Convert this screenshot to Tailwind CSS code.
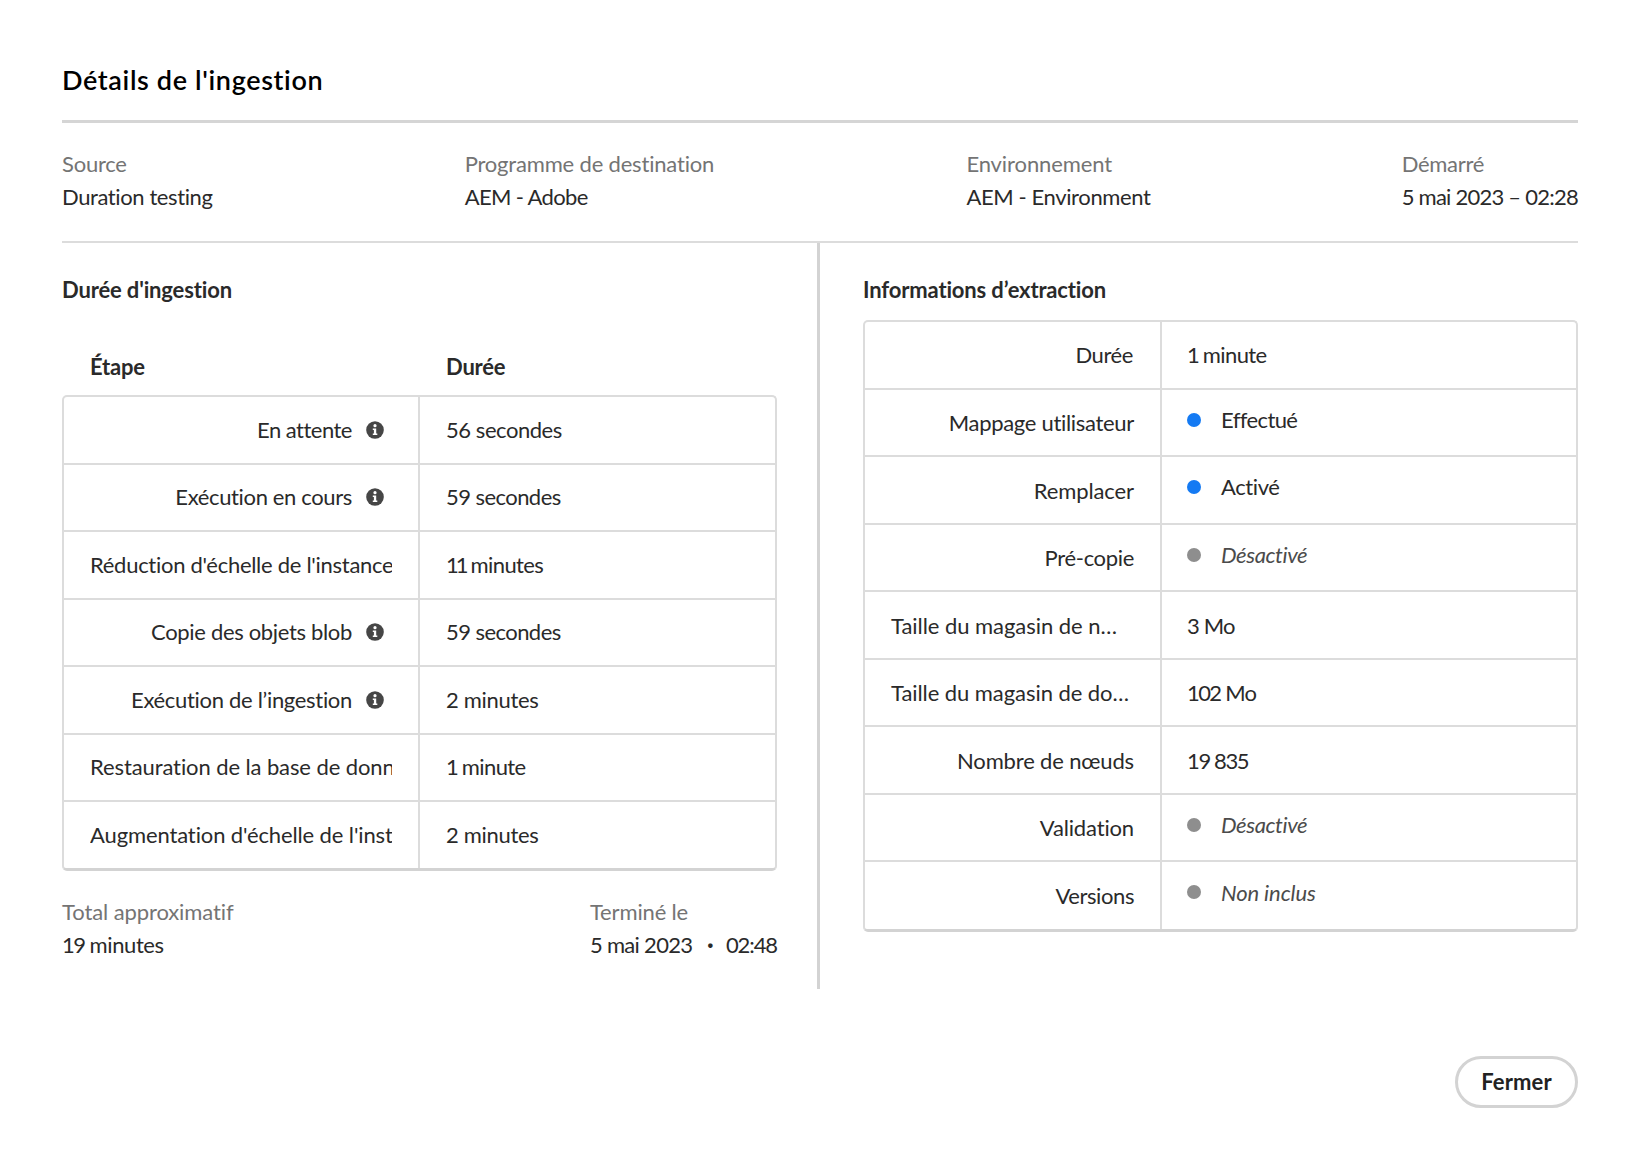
<!DOCTYPE html>
<html lang="fr">
<head>
<meta charset="utf-8">
<title>Détails de l'ingestion</title>
<script src="https://cdn.jsdelivr.net/npm/@tailwindcss/browser@4"></script>
</head>
<body class="bg-white">
<svg class="hidden">
  <symbol id="info" viewBox="0 0 18 18">
    <circle cx="9" cy="9" r="8.8" fill="#464646"/>
    <circle cx="9" cy="4.7" r="1.6" fill="#fff"/>
    <path d="M6.8 7.4h3.4v5h1.1v1.6H6.8v-1.6h1.1V9H6.8z" fill="#fff"/>
  </symbol>
</svg>
<main class="flex h-[1161px] flex-col pr-[65px] pl-[62px] font-['Lato',sans-serif] text-[22px] leading-[33px] tracking-[-0.3px] whitespace-nowrap text-[#2a2a2a]">
  <header class="h-[123px] border-b-3 border-[#d5d5d5] pt-[62px]">
    <h1 class="text-[27px] leading-9 font-semibold tracking-[0.64px] text-black">Détails de l'ingestion</h1>
  </header>

  <section class="flex h-[120px] justify-between border-b-2 border-[#dcdcdc] pt-6">
    <div><div class="tracking-[-0.22px] text-[#747474]">Source</div><div class="tracking-[-0.4px]">Duration testing</div></div>
    <div class="pl-px"><div class="tracking-[-0.18px] text-[#747474]">Programme de destination</div><div class="tracking-[-0.65px] word-spacing-[1px]">AEM - Adobe</div></div>
    <div class="pl-px"><div class="tracking-[-0.1px] text-[#747474]">Environnement</div><div class="tracking-[-0.38px]">AEM - Environment</div></div>
    <div><div class="tracking-[-0.3px] text-[#747474]">Démarré</div><div class="tracking-[-0.76px]">5 mai 2023 – 02:28</div></div>
  </section>

  <div class="flex h-[746px]">
    <section class="w-[715px] pt-[30px]">
      <h2 class="font-bold tracking-[-0.15px]">Durée d'ingestion</h2>
      <div class="mt-11 flex font-bold tracking-[-0.2px]">
        <div class="w-[384px] pl-7">Étape</div>
        <div>Durée</div>
      </div>
      <div class="mt-3 rounded-[5px] border-2 border-b-3 border-[#dcdcdc] border-b-[#d3d3d3]">
        <div class="flex h-[67.5px] border-b-2 border-[#dcdcdc]">
          <div class="flex w-[356px] justify-end gap-3.5 border-r-2 border-[#dcdcdc] pt-[15.5px] pr-[34px]"><span class="tracking-[-0.5px]">En attente</span><svg class="mt-[8px] size-[18px]"><use href="#info"/></svg></div>
          <div class="pt-[15.5px] pl-[26px] tracking-[-0.45px]">56 secondes</div>
        </div>
        <div class="flex h-[67.5px] border-b-2 border-[#dcdcdc]">
          <div class="flex w-[356px] justify-end gap-3.5 border-r-2 border-[#dcdcdc] pt-[15.5px] pr-[34px]"><span class="tracking-[-0.36px]">Exécution en cours</span><svg class="mt-[8px] size-[18px]"><use href="#info"/></svg></div>
          <div class="pt-[15.5px] pl-[26px] tracking-[-0.56px]">59 secondes</div>
        </div>
        <div class="flex h-[67.5px] border-b-2 border-[#dcdcdc]">
          <div class="w-[356px] border-r-2 border-[#dcdcdc] px-[26px] pt-[15.5px]"><div class="overflow-hidden tracking-[-0.28px]">Réduction d'échelle de l'instance</div></div>
          <div class="pt-[15.5px] pl-[26px]"><span class="tracking-[-3px]">11</span><span class="tracking-[-0.6px]"> minutes</span></div>
        </div>
        <div class="flex h-[67.5px] border-b-2 border-[#dcdcdc]">
          <div class="flex w-[356px] justify-end gap-3.5 border-r-2 border-[#dcdcdc] pt-[15.5px] pr-[34px]"><span class="tracking-[-0.33px]">Copie des objets blob</span><svg class="mt-[8px] size-[18px]"><use href="#info"/></svg></div>
          <div class="pt-[15.5px] pl-[26px] tracking-[-0.56px]">59 secondes</div>
        </div>
        <div class="flex h-[67.5px] border-b-2 border-[#dcdcdc]">
          <div class="flex w-[356px] justify-end gap-3.5 border-r-2 border-[#dcdcdc] pt-[15.5px] pr-[34px]"><span class="tracking-[-0.31px]">Exécution de l’ingestion</span><svg class="mt-[8px] size-[18px]"><use href="#info"/></svg></div>
          <div class="pt-[15.5px] pl-[26px]">2 minutes</div>
        </div>
        <div class="flex h-[67.5px] border-b-2 border-[#dcdcdc]">
          <div class="w-[356px] border-r-2 border-[#dcdcdc] px-[26px] pt-[15.5px]"><div class="overflow-hidden tracking-[-0.1px]">Restauration de la base de données</div></div>
          <div class="pt-[15.5px] pl-[26px] tracking-[-0.6px]"><span class="tracking-[-2px]">1</span> minute</div>
        </div>
        <div class="flex h-[66px]">
          <div class="w-[356px] border-r-2 border-[#dcdcdc] px-[26px] pt-[15.5px]"><div class="overflow-hidden tracking-[-0.12px]">Augmentation d'échelle de l'instance</div></div>
          <div class="pt-[15.5px] pl-[26px]">2 minutes</div>
        </div>
      </div>
      <div class="mt-6 flex justify-between">
        <div><div class="tracking-[-0.1px] text-[#747474]">Total approximatif</div><div class="tracking-[-0.4px]"><span class="tracking-[-1.6px]">19</span> minutes</div></div>
        <div><div class="tracking-[-0.15px] text-[#747474]">Terminé le</div><div class="flex tracking-[-0.7px]"><span class="w-[104px]">5 mai 2023</span><span class="w-[32px] text-center font-black">·</span><span class="tracking-[-1.1px]">02:48</span></div></div>
      </div>
    </section>

    <div class="ml-10 w-[3px] bg-[#d3d3d3]"></div>

    <section class="ml-[43px] flex-1 pt-[30px]">
      <h2 class="font-bold tracking-[-0.15px]">Informations d’extraction</h2>
      <div class="mt-3.5 rounded-[5px] border-2 border-b-3 border-[#dcdcdc] border-b-[#d3d3d3]">
        <div class="flex h-[67.5px] border-b-2 border-[#dcdcdc]">
          <div class="w-[297px] border-r-2 border-[#dcdcdc] pt-4 pr-[27px] text-right tracking-[-0.4px]">Durée</div>
          <div class="pt-4 pl-[25px] tracking-[-0.6px]"><span class="tracking-[-2px]">1</span> minute</div>
        </div>
        <div class="flex h-[67.5px] border-b-2 border-[#dcdcdc]">
          <div class="w-[297px] border-r-2 border-[#dcdcdc] pt-4 pr-[26px] text-right tracking-[-0.31px]">Mappage utilisateur</div>
          <div class="flex gap-5 pt-[13px] pl-[25px]"><span class="mt-[10px] size-[14px] rounded-full bg-[#147af3]"></span><span class="tracking-[-0.6px]">Effectué</span></div>
        </div>
        <div class="flex h-[67.5px] border-b-2 border-[#dcdcdc]">
          <div class="w-[297px] border-r-2 border-[#dcdcdc] pt-[16.5px] pr-[26px] text-right tracking-[-0.1px]">Remplacer</div>
          <div class="flex gap-5 pt-[13px] pl-[25px]"><span class="mt-[10px] size-[14px] rounded-full bg-[#147af3]"></span><span class="tracking-[-0.4px]">Activé</span></div>
        </div>
        <div class="flex h-[67.5px] border-b-2 border-[#dcdcdc]">
          <div class="w-[297px] border-r-2 border-[#dcdcdc] pt-4 pr-[26px] text-right tracking-[-0.33px]">Pré-copie</div>
          <div class="flex gap-5 pt-[13px] pl-[25px] text-[#4b4b4b]"><span class="mt-[10px] size-[14px] rounded-full bg-[#8e8e8e]"></span><span class="tracking-[-0.4px] italic">Désactivé</span></div>
        </div>
        <div class="flex h-[67.5px] border-b-2 border-[#dcdcdc]">
          <div class="w-[297px] border-r-2 border-[#dcdcdc] pt-[16.5px] pl-[26px] tracking-[-0.05px]">Taille du magasin de n…</div>
          <div class="pt-[16.5px] pl-[25px] tracking-[-0.8px]">3 Mo</div>
        </div>
        <div class="flex h-[67.5px] border-b-2 border-[#dcdcdc]">
          <div class="w-[297px] border-r-2 border-[#dcdcdc] pt-4 pl-[26px] tracking-[-0.07px]">Taille du magasin de do…</div>
          <div class="pt-4 pl-[25px]"><span class="tracking-[-1.6px]">102</span><span class="tracking-[-0.8px]"> Mo</span></div>
        </div>
        <div class="flex h-[67.5px] border-b-2 border-[#dcdcdc]">
          <div class="w-[297px] border-r-2 border-[#dcdcdc] pt-[16.5px] pr-[26px] text-right tracking-[-0.16px]">Nombre de nœuds</div>
          <div class="flex gap-1 pt-[16.5px] pl-[25px] tracking-[-1.3px]"><span>19</span><span>835</span></div>
        </div>
        <div class="flex h-[67.5px] border-b-2 border-[#dcdcdc]">
          <div class="w-[297px] border-r-2 border-[#dcdcdc] pt-4 pr-[26px] text-right tracking-[-0.15px]">Validation</div>
          <div class="flex gap-5 pt-[13px] pl-[25px] text-[#4b4b4b]"><span class="mt-[10px] size-[14px] rounded-full bg-[#8e8e8e]"></span><span class="tracking-[-0.4px] italic">Désactivé</span></div>
        </div>
        <div class="flex h-[67px]">
          <div class="w-[297px] border-r-2 border-[#dcdcdc] pt-[16.5px] pr-[26px] text-right tracking-[-0.41px]">Versions</div>
          <div class="flex gap-5 pt-[13.5px] pl-[25px] text-[#4b4b4b]"><span class="mt-[9.5px] size-[14px] rounded-full bg-[#8e8e8e]"></span><span class="tracking-[-0.1px] italic">Non inclus</span></div>
        </div>
      </div>
    </section>
  </div>

  <footer class="mt-[67px] flex justify-end">
    <button class="h-[52px] w-[123px] rounded-full border-3 border-[#d3d3d3] pb-0.5 leading-[33px] font-bold tracking-[0.1px] text-[#222]">Fermer</button>
  </footer>
</main>
</body>
</html>
